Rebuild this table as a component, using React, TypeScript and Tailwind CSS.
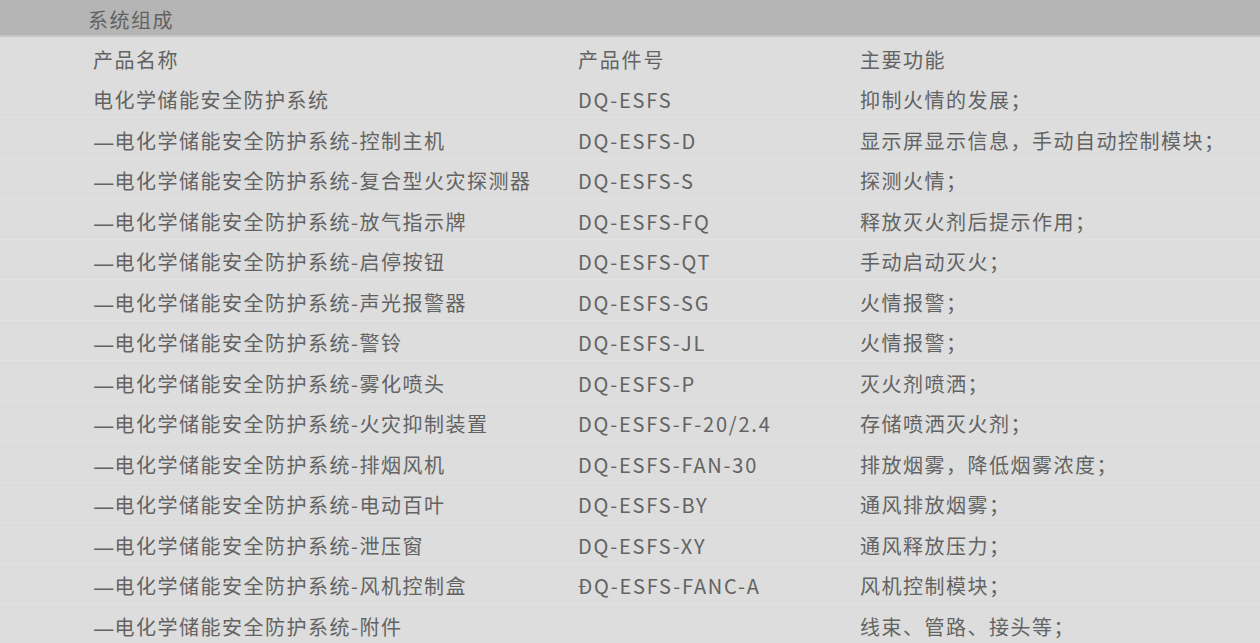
import React from "react";

interface Row {
  name: string;
  code: string;
  func: string;
  sub?: boolean;
}

const ROWS: Row[] = [
  { name: "电化学储能安全防护系统", code: "DQ-ESFS", func: "抑制火情的发展；" },
  { sub: true, name: "电化学储能安全防护系统-控制主机", code: "DQ-ESFS-D", func: "显示屏显示信息，手动自动控制模块；" },
  { sub: true, name: "电化学储能安全防护系统-复合型火灾探测器", code: "DQ-ESFS-S", func: "探测火情；" },
  { sub: true, name: "电化学储能安全防护系统-放气指示牌", code: "DQ-ESFS-FQ", func: "释放灭火剂后提示作用；" },
  { sub: true, name: "电化学储能安全防护系统-启停按钮", code: "DQ-ESFS-QT", func: "手动启动灭火；" },
  { sub: true, name: "电化学储能安全防护系统-声光报警器", code: "DQ-ESFS-SG", func: "火情报警；" },
  { sub: true, name: "电化学储能安全防护系统-警铃", code: "DQ-ESFS-JL", func: "火情报警；" },
  { sub: true, name: "电化学储能安全防护系统-雾化喷头", code: "DQ-ESFS-P", func: "灭火剂喷洒；" },
  { sub: true, name: "电化学储能安全防护系统-火灾抑制装置", code: "DQ-ESFS-F-20/2.4", func: "存储喷洒灭火剂；" },
  { sub: true, name: "电化学储能安全防护系统-排烟风机", code: "DQ-ESFS-FAN-30", func: "排放烟雾，降低烟雾浓度；" },
  { sub: true, name: "电化学储能安全防护系统-电动百叶", code: "DQ-ESFS-BY", func: "通风排放烟雾；" },
  { sub: true, name: "电化学储能安全防护系统-泄压窗", code: "DQ-ESFS-XY", func: "通风释放压力；" },
  { sub: true, name: "电化学储能安全防护系统-风机控制盒", code: "ĐQ-ESFS-FANC-A", func: "风机控制模块；" },
  { sub: true, name: "电化学储能安全防护系统-附件", code: "", func: "线束、管路、接头等；" },
];

const TableRow: React.FC<{ row: Row; head?: boolean }> = ({ row, head }) => (
  <div
    className={`flex items-center h-[40.5px] pt-[6px] ${
      head ? "" : "border-b border-[#e1e2e1]"
    }`}
  >
    <div className="w-[485px] pl-[93px] box-content whitespace-nowrap flex items-center">
      {row.sub && (
        <span className="inline-block w-[21.5px] text-[24px] leading-none tracking-normal">—</span>
      )}
      <span>{row.name}</span>
    </div>
    <div className="w-[282px] whitespace-nowrap tracking-[1.8px]">{row.code}</div>
    <div className="flex-1 whitespace-nowrap">{row.func}</div>
  </div>
);

export default function App() {
  return (
    <div
      className="w-[1260px] h-[643px] overflow-hidden bg-[#dcdddc] text-[#636363] text-[20px] tracking-[1.5px]"
      style={{ fontFamily: '"Noto Sans CJK SC", "Noto Sans", sans-serif' }}
    >
      <div className="h-[37px] bg-[#b5b5b5] border-b-2 border-[#c6c6c6] pl-[88px] flex items-end">
        <span className="text-[#626262] leading-[30px]">系统组成</span>
      </div>
      <TableRow head row={{ name: "产品名称", code: "产品件号", func: "主要功能" }} />
      {ROWS.map((r) => (
        <TableRow key={r.name} row={r} />
      ))}
    </div>
  );
}
